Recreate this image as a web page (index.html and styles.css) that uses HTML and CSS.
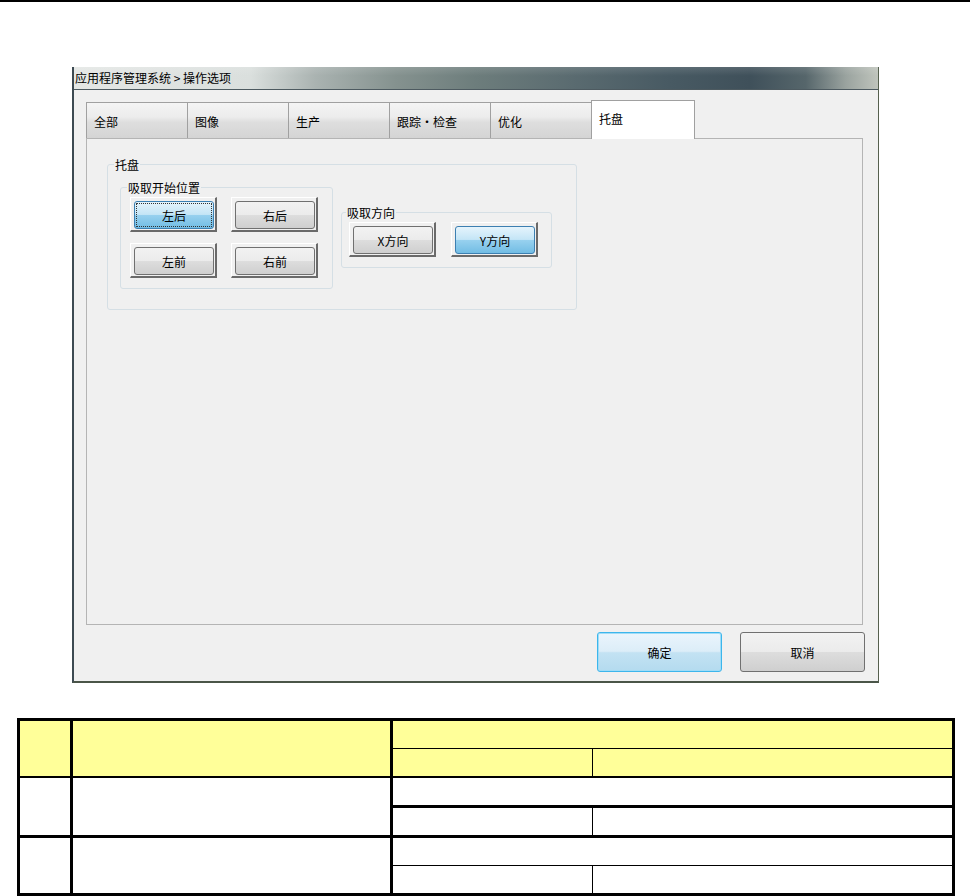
FILE: index.html
```html
<!DOCTYPE html>
<html>
  <head>
    <title>操作选项</title>
    <link rel="stylesheet" href="styles.css">
  </head>
  <body>
    <div class="top-rule"></div>

    <div class="window">
      <div class="title-bar">应用程序管理系统 &gt; 操作选项</div>
      <div class="window-body">
        <div class="tabs">
          <div class="tab">全部</div>
          <div class="tab">图像</div>
          <div class="tab">生产</div>
          <div class="tab">跟踪・检查</div>
          <div class="tab">优化</div>
          <div class="tab active">托盘</div>
        </div>

        <div class="tab-panel">
          <fieldset class="group group-main">
            <legend>托盘</legend>
            <div class="group-main-body">
              <fieldset class="group group-start">
                <legend>吸取开始位置</legend>
                <div class="btn-grid">
                  <div class="btn-frame"><div class="btn selected focused">左后</div></div>
                  <div class="btn-frame"><div class="btn">右后</div></div>
                  <div class="btn-frame"><div class="btn">左前</div></div>
                  <div class="btn-frame"><div class="btn">右前</div></div>
                </div>
              </fieldset>

              <fieldset class="group group-dir">
                <legend>吸取方向</legend>
                <div class="btn-row">
                  <div class="btn-frame"><div class="btn">X方向</div></div>
                  <div class="btn-frame"><div class="btn selected">Y方向</div></div>
                </div>
              </fieldset>
            </div>
          </fieldset>
        </div>

        <div class="dialog-actions">
          <div class="dlg-btn default">确定</div>
          <div class="dlg-btn">取消</div>
        </div>
      </div>
    </div>

    <table class="spec-table">
      <colgroup>
        <col class="c1">
        <col class="c2">
        <col class="c3">
        <col class="c4">
      </colgroup>
      <tr class="head">
        <td rowspan="2" class="thick-r"></td>
        <td rowspan="2" class="thick-r"></td>
        <td colspan="2" class="sub-top"></td>
      </tr>
      <tr class="head">
        <td></td>
        <td></td>
      </tr>
      <tr class="first">
        <td rowspan="2" class="thick-r thick-b"></td>
        <td rowspan="2" class="thick-r thick-b"></td>
        <td colspan="2" class="thick-under"></td>
      </tr>
      <tr>
        <td class="thick-b"></td>
        <td class="thick-b"></td>
      </tr>
      <tr>
        <td rowspan="2" class="thick-r"></td>
        <td rowspan="2" class="thick-r"></td>
        <td colspan="2"></td>
      </tr>
      <tr>
        <td></td>
        <td></td>
      </tr>
    </table>
  </body>
</html>
```

FILE: styles.css
```css
body {
  margin: 0;
  background: #fff;
  font-family: "Noto Sans CJK SC", "Liberation Sans", sans-serif;
  font-size: 12px;
  color: #000;
}

.top-rule {
  height: 2px;
  background: #000;
}

/* window */
.window {
  width: 807px;
  margin: 65px 0 0 72px;
  box-sizing: border-box;
  border-left: 2px solid #3d4a52;
  border-right: 1px solid #55604e;
  border-bottom: 2px solid #4a5548;
}
.title-bar {
  height: 23px;
  line-height: 22px;
  padding-left: 1px;
  box-sizing: border-box;
  border-bottom: 1px solid #4d5a60;
  background:
    linear-gradient(rgba(255, 255, 255, 0.12), rgba(255, 255, 255, 0) 40%),
    linear-gradient(to right, #e4e7e5 0%, #dadfdd 22%, #aab3b1 30%, #85928f 40%, #6d7d7c 50%, #5a6b70 62%, #485a63 74%, #3f505a 84%, #56666b 91%, #9aa39f 96%, #bfc4bc 100%);
  white-space: nowrap;
}
.window-body {
  background: #f0f0f0;
  padding: 12px 13px 9px 12px;
}

/* tabs */
.tabs {
  display: flex;
  align-items: flex-end;
  height: 36px;
}
.tab {
  box-sizing: border-box;
  width: 101px;
  height: 36px;
  padding: 10px 0 0 7px;
  border: 1px solid #a0a0a0;
  border-right: none;
  border-bottom: none;
  background: linear-gradient(#f4f4f4 0%, #ececec 40%, #dedede 55%, #d4d4d4 100%);
}
.tab.active {
  position: relative;
  width: 104px;
  height: 39px;
  margin-bottom: -1px;
  padding-top: 9px;
  border-right: 1px solid #a0a0a0;
  background: #fff;
}

.tab-panel {
  box-sizing: border-box;
  width: 777px;
  height: 487px;
  border: 1px solid #b4b4b4;
  padding: 17px 0 0 20px;
}

/* group boxes */
.group {
  margin: 0;
  padding: 0;
  border: 1px solid #d5dfe5;
  border-radius: 3px;
  min-width: 0;
}
.group legend {
  padding: 0 1px;
  line-height: 17px;
  font-size: 12px;
}
.group-main {
  box-sizing: border-box;
  width: 470px;
}
.group-main legend {
  margin-left: 6px;
}
.group-main-body {
  display: flex;
  align-items: flex-start;
  padding: 6px 0 20px 12px;
}
.group-start {
  box-sizing: border-box;
  width: 213px;
}
.group-start legend {
  margin-left: 6px;
}
.group-dir {
  box-sizing: border-box;
  width: 211px;
  margin: 25px 0 0 8px;
}
.group-dir legend {
  margin-left: 4px;
}

.btn-grid {
  display: grid;
  grid-template-columns: 87px 87px;
  column-gap: 14px;
  row-gap: 11px;
  padding: 1px 0 10px 9px;
}
.btn-row {
  display: flex;
  gap: 15px;
  padding: 1px 0 10px 7px;
}

.btn-frame {
  box-sizing: border-box;
  width: 87px;
  height: 35px;
  border-top: 1px solid #fff;
  border-left: 1px solid #fff;
  border-right: 2px solid #6a6a6a;
  border-bottom: 2px solid #6a6a6a;
  padding: 3px 1px 1px 3px;
}
.btn {
  box-sizing: border-box;
  height: 100%;
  border: 1px solid #707070;
  border-radius: 3px;
  background: linear-gradient(#f2f2f2 0%, #ebebeb 50%, #dddddd 51%, #cfcfcf 100%);
  display: flex;
  align-items: center;
  justify-content: center;
}
.btn.selected {
  border-color: #3c7fb1;
  background: linear-gradient(#e5f4fc 0%, #c4e5f6 48%, #98d1ef 50%, #72bde4 100%);
}
.btn.focused {
  outline: 1px dotted #333;
  outline-offset: -3px;
}

/* dialog buttons */
.dialog-actions {
  display: flex;
  justify-content: flex-end;
  gap: 18px;
  margin-top: 7px;
}
.dlg-btn {
  box-sizing: border-box;
  width: 125px;
  height: 40px;
  border: 1px solid #707070;
  border-radius: 3px;
  background: linear-gradient(#f2f2f2 0%, #ebebeb 50%, #dddddd 51%, #cfcfcf 100%);
  display: flex;
  align-items: center;
  justify-content: center;
}
.dlg-btn.default {
  border-color: #3cb6ec;
  box-shadow: inset 0 0 0 1px #9fdcf7;
  background: linear-gradient(#eaf5fc 0%, #dcedf8 48%, #c3e2f3 52%, #b4dbef 100%);
}

/* table */
.spec-table {
  margin: 35px 0 0 17px;
  width: 935px;
  border-collapse: collapse;
  border: 3px solid #000;
  table-layout: fixed;
}
.spec-table .c1 { width: 53px; }
.spec-table .c2 { width: 320px; }
.spec-table .c3 { width: 201px; }
.spec-table .c4 { width: 361px; }
.spec-table td {
  border: 1px solid #000;
  height: 27px;
  padding: 0;
}
.spec-table tr.head td {
  background: #ffff99;
}
.spec-table tr.head + tr.head td {
  border-bottom: 2px solid #000;
}
.spec-table tr.head:first-child td.thick-r {
  border-bottom: 2px solid #000;
}
.spec-table td.thick-r {
  border-right: 3px solid #000;
}
.spec-table td.thick-b {
  border-bottom: 3px solid #000;
}
.spec-table td.thick-under {
  border-bottom: 3px solid #000;
}
```
